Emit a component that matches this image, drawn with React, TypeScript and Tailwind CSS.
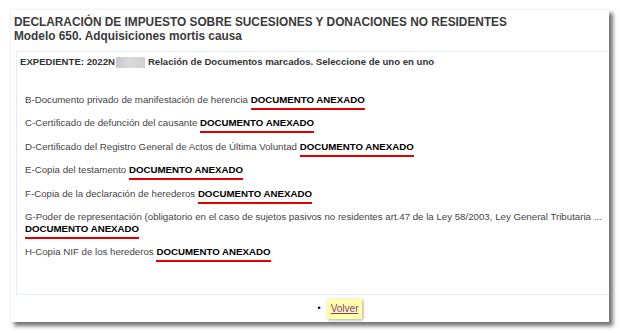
import React from "react";

const items: { label: string; wrap?: boolean }[] = [
  { label: "B-Documento privado de manifestación de herencia" },
  { label: "C-Certificado de defunción del causante" },
  { label: "D-Certificado del Registro General de Actos de Última Voluntad" },
  { label: "E-Copia del testamento" },
  { label: "F-Copia de la declaración de herederos" },
  {
    label:
      "G-Poder de representación (obligatorio en el caso de sujetos pasivos no residentes art.47 de la Ley 58/2003, Ley General Tributaria ...",
    wrap: true,
  },
  { label: "H-Copia NIF de los herederos" },
];

function Anexado() {
  return (
    <span className="inline-block font-bold text-black border-b-2 border-[#e00000] leading-[12px] pb-[2px]">
      DOCUMENTO ANEXADO
    </span>
  );
}

export default function App() {
  return (
    <div
      className="w-[620px] h-[333px] bg-white pl-[10px] pt-[9px]"
      style={{ fontFamily: '"Liberation Sans", Arial, sans-serif' }}
    >
      <div className="w-[599px] h-[313px] bg-white flex flex-col shadow-[4px_4px_4px_rgba(0,0,0,0.55)] border-t border-l border-[#f2f2f2]">
        <div className="pl-[3px] pt-[5px] h-[41px] text-[#3a3a3a] font-bold text-[11.85px] leading-[14px]">
          <div>DECLARACIÓN DE IMPUESTO SOBRE SUCESIONES Y DONACIONES NO RESIDENTES</div>
          <div>Modelo 650. Adquisiciones mortis causa</div>
        </div>
        <div className="ml-[5px] h-[244px] border border-[#e2edf5] border-r-0 flex flex-col">
          <div className="pl-[3px] pt-[3px] text-[9.6px] font-bold text-[#333] flex items-center h-[17px]">
            <span>EXPEDIENTE: 2022N</span>
            <span className="inline-block w-[29px] h-[11px] bg-gradient-to-r from-[#c8c8c8] via-[#dadada] to-[#d0d0d0] mx-[1px]" />
            <span className="ml-[2px]">Relación de Documentos marcados. Seleccione de uno en uno</span>
          </div>
          <div className="pl-[8px] pt-[25px] flex flex-col gap-[7.4px] text-[9.7px] text-[#444]">
            {items.map((it) => (
              <div key={it.label} className="leading-[12px]">
                {it.label}
                {it.wrap ? <br /> : " "}
                <Anexado />
              </div>
            ))}
          </div>
        </div>
        <div className="flex-1 flex items-center justify-center pl-[60px]">
          <span className="text-[9px] text-black mr-[6px]">•</span>
          <a
            href="#"
            className="bg-[#ffffa8] px-[4px] py-[4px] leading-[12px] text-[10px] text-[#8b3a8b] underline shadow-[1px_1px_3px_rgba(0,0,0,0.35)]"
          >
            Volver
          </a>
        </div>
      </div>
    </div>
  );
}
